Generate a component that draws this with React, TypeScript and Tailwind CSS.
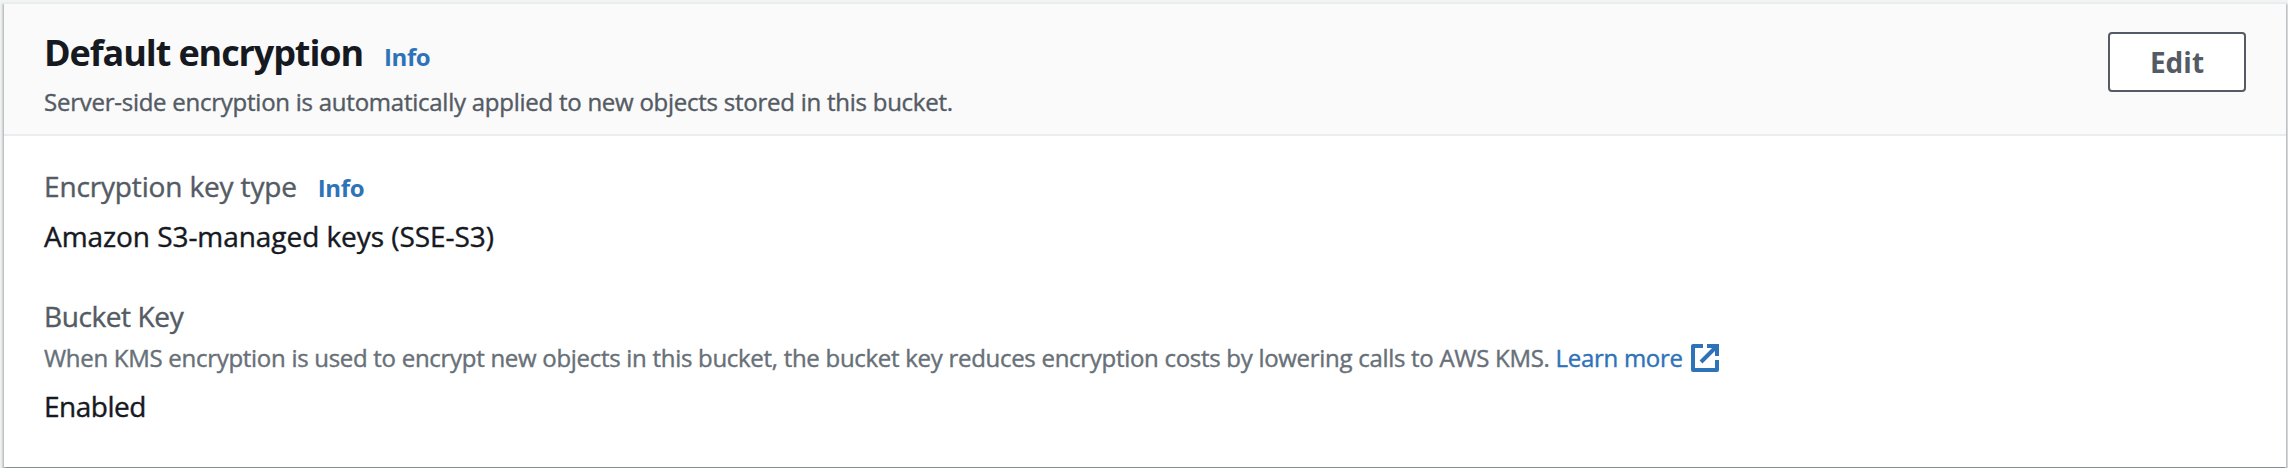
import type { ReactNode } from "react";

function InfoLink() {
  return (
    <a href="#" className="text-[24px] leading-[36px] font-bold tracking-[-0.4px] text-[#2e73b8]">
      Info
    </a>
  );
}

function Label({ children }: { children: ReactNode }) {
  return <span className="text-[28px] leading-[44px] text-[#545b64] [-webkit-text-stroke:0.4px]">{children}</span>;
}

function Value({ children }: { children: ReactNode }) {
  return <p className="text-[28px] leading-[44px] text-[#16191f] [-webkit-text-stroke:0.4px]">{children}</p>;
}

function ExternalIcon() {
  return (
    <svg className="ml-2 h-7 w-7 shrink-0" viewBox="0 0 28 28" fill="none" stroke="#2e73b8" strokeWidth="4">
      <path d="M12 2H2V26H26V16" strokeLinejoin="round" />
      <path d="M16 2H26V12M26 2L10 18" />
    </svg>
  );
}

export default function App() {
  return (
    <div className="h-[468px] w-[2288px] overflow-hidden bg-[#f2f3f3] pt-0.5 pr-0.5 pb-px pl-1">
      <section className="flex h-full flex-col border-t-2 border-[#eaeded] bg-white font-['Open_Sans','Noto_Sans',sans-serif] whitespace-nowrap shadow-[0_2px_2px_0_rgba(0,28,36,0.3),2px_2px_2px_0_rgba(0,28,36,0.15),-2px_2px_2px_0_rgba(0,28,36,0.15)]">
        <header className="flex h-[132px] items-start justify-between border-b-2 border-[#eaeded] bg-[#fafafa] px-10">
          <div className="flex flex-col pt-[22px]">
            <div className="flex items-baseline gap-[21px]">
              <h2 className="text-[36px] leading-[54px] font-bold tracking-[-1.1px] text-[#16191f]">Default encryption</h2>
              <InfoLink />
            </div>
            <p className="text-[24px] leading-[44px] tracking-[-0.25px] text-[#545b64] [-webkit-text-stroke:0.4px]">
              Server-side encryption is automatically applied to new objects stored in this bucket.
            </p>
          </div>
          <button className="mt-7 h-[60px] w-[138px] rounded-[4px] border-2 border-[#545b64] bg-white text-[28px] font-bold text-[#545b64]">
            Edit
          </button>
        </header>
        <main className="flex flex-col px-10 pt-7">
          <div className="flex items-baseline gap-[21px] tracking-[-0.15px]">
            <Label>Encryption key type</Label>
            <InfoLink />
          </div>
          <div className="pt-1.5 tracking-[-0.06px]">
            <Value>Amazon S3-managed keys (SSE-S3)</Value>
          </div>
          <div className="flex pt-9 tracking-[-0.4px]">
            <Label>Bucket Key</Label>
          </div>
          <div className="flex items-center text-[24px] leading-[40px] tracking-[-0.29px] text-[#687078] [-webkit-text-stroke:0.4px]">
            <p>
              When KMS encryption is used to encrypt new objects in this bucket, the bucket key reduces encryption costs by
              lowering calls to AWS KMS.{" "}
              <a href="#" className="text-[#2e73b8]">
                Learn more
              </a>
            </p>
            <ExternalIcon />
          </div>
          <div className="pt-1.5 tracking-[-0.5px]">
            <Value>Enabled</Value>
          </div>
        </main>
      </section>
    </div>
  );
}
